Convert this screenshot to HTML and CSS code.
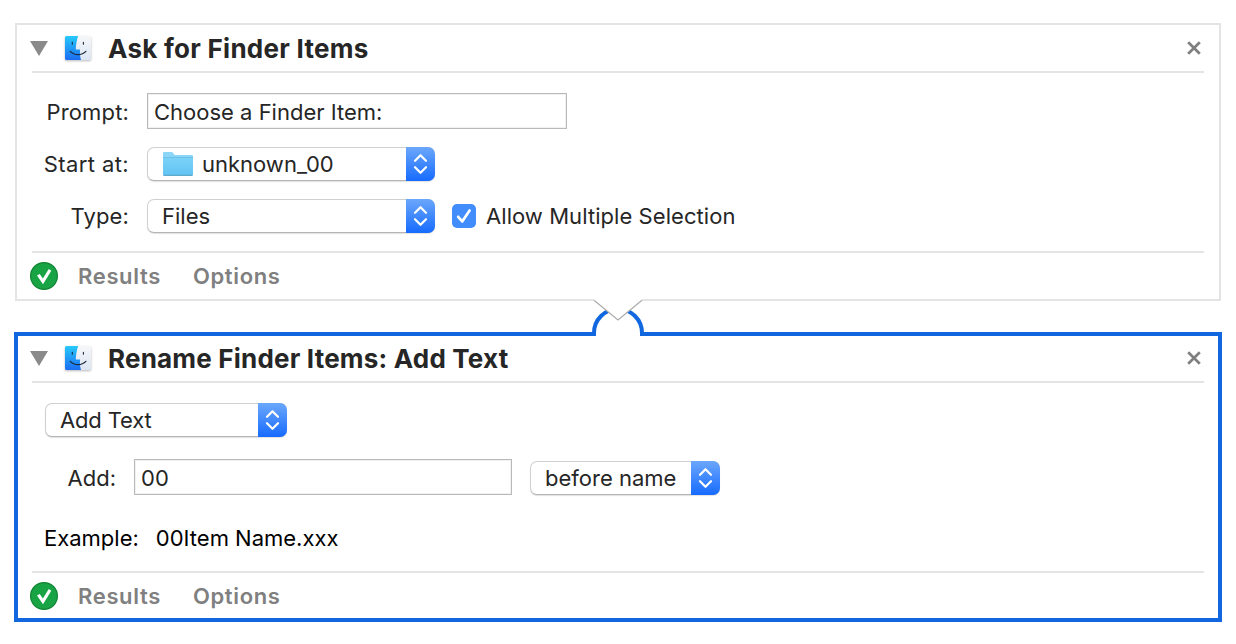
FILE: index.html
```html
<!DOCTYPE html>
<html lang="en">
<head>
<meta charset="utf-8">
<title>Workflow</title>
<link rel="stylesheet" href="styles.css">
</head>
<body>
<svg class="defs" width="0" height="0" aria-hidden="true">
  <defs>
    <linearGradient id="face" x1="0" y1="0" x2="0" y2="1"><stop offset="0" stop-color="#26c9fb"/><stop offset="1" stop-color="#1b6df2"/></linearGradient>
    <linearGradient id="side" x1="0" y1="0" x2="0" y2="1"><stop offset="0" stop-color="#f6f7f9"/><stop offset="1" stop-color="#dbe5f3"/></linearGradient>
    <linearGradient id="folder" x1="0" y1="0" x2="0" y2="1"><stop offset="0" stop-color="#7bd2f8"/><stop offset="1" stop-color="#62c3f2"/></linearGradient>
    <symbol id="finder" viewBox="0 0 28 28">
      <rect x="1" y="1" width="26" height="24" rx="1.5" fill="url(#side)"/>
      <path d="M2.5 1H14.2C12.7 5 12 9.500 11.800 14.500H16C15.800 18 16 21.500 17 25H2.500Q1 25 1 23.500V2.500Q1 1 2.500 1Z" fill="url(#face)"/>
      <path d="M8.300 7.200V9.300M19.400 7.200V9.300" stroke="#1c2b3c" stroke-width="1.100" stroke-linecap="round"/>
      <path d="M6.200 16.300C10.500 20.700 17.600 20.700 21.900 16.300" fill="none" stroke="#1c2b3c" stroke-width="1.200" stroke-linecap="round"/>
    </symbol>
    <symbol id="close" viewBox="0 0 14 14"><path d="M1.200 1.200L12.800 12.800M12.800 1.200L1.200 12.800" stroke="#7f7f7f" stroke-width="2.700"/></symbol>
    <symbol id="updown" viewBox="0 0 15 22"><path d="M2 7.800L7.500 2.200L13 7.800M2 14.200L7.500 19.800L13 14.200" fill="none" stroke="#fff" stroke-width="2.200" stroke-linecap="round" stroke-linejoin="round"/></symbol>
    <symbol id="done" viewBox="0 0 28 28">
      <circle cx="14" cy="14" r="13.400" fill="#18a445" stroke="#138435" stroke-width="1.200"/>
      <path d="M7 13.600L9.700 12L12.900 16.600L18.800 7L21.300 8.700L13 22.300Z" fill="#fff"/>
    </symbol>
  </defs>
</svg>
<main class="workflow">
  <section class="action">
    <header class="head">
      <svg class="disclosure" viewBox="0 0 18 15"><path d="M0 0H18L9 15Z" fill="#8a8a8a"/></svg>
      <svg class="finder"><use href="#finder"/></svg>
      <h2 class="title ask">Ask for Finder Items</h2>
      <svg class="close"><use href="#close"/></svg>
    </header>
    <div class="form">
      <div class="row"><span class="label">Prompt:</span><div class="field prompt">Choose a Finder Item:</div></div>
      <div class="row">
        <span class="label start">Start at:</span>
        <div class="popup wide">
          <svg class="folder" viewBox="0 0 32 26"><path d="M1 23.500V2Q1 1 2 1H9.500Q10.500 1 11.200 2L12.500 4H30Q31 4 31 5V23.500Z" fill="#8bd6f7"/><path d="M1 6.500H31V23.500Q31 24.500 30 24.500H2Q1 24.500 1 23.500Z" fill="url(#folder)"/><path d="M1 6.500H31" stroke="#65bce4" stroke-width=".8"/><path d="M1.500 24.300H30.500" stroke="#4d9dc4"/></svg>
          <span class="value">unknown_00</span><span class="arrows"><svg><use href="#updown"/></svg></span>
        </div>
      </div>
      <div class="row">
        <span class="label">Type:</span>
        <div class="popup wide"><span class="value">Files</span><span class="arrows"><svg><use href="#updown"/></svg></span></div>
        <span class="check"><svg viewBox="0 0 24 24"><path d="M6.200 12.800L10.200 17.400L17.600 6.500" fill="none" stroke="#fff" stroke-width="2.700" stroke-linecap="round" stroke-linejoin="round"/></svg></span>
        <span class="multiple">Allow Multiple Selection</span>
      </div>
    </div>
    <footer class="foot"><svg class="done"><use href="#done"/></svg><span class="results">Results</span><span>Options</span></footer>
  </section>
  <section class="action selected">
    <svg class="connector" viewBox="0 0 56 40">
      <path d="M6 34H50V38H6Z" fill="#fff"/>
      <path d="M4 38V35A24 24 0 0 1 52 35V38" fill="#fff" stroke="#1167df" stroke-width="4"/>
      <path d="M4 0H52V2.300L28 22L4 2.300Z" fill="#fff"/>
      <path d="M4 2.300L28 22L52 2.300" fill="none" stroke="#acacac" stroke-width="1.200"/>
    </svg>
    <header class="head">
      <svg class="disclosure" viewBox="0 0 18 15"><path d="M0 0H18L9 15Z" fill="#8a8a8a"/></svg>
      <svg class="finder"><use href="#finder"/></svg>
      <h2 class="title rename">Rename Finder Items: Add Text</h2>
      <svg class="close"><use href="#close"/></svg>
    </header>
    <div class="form rename-form">
      <div class="popup mode"><span class="value">Add Text</span><span class="arrows"><svg><use href="#updown"/></svg></span></div>
      <div class="row add"><span class="label">Add:</span><div class="field text">00</div>
        <div class="popup position"><span class="value">before name</span><span class="arrows"><svg><use href="#updown"/></svg></span></div></div>
      <div class="example"><span class="caption">Example:</span><span>00Item Name.xxx</span></div>
    </div>
    <footer class="foot"><svg class="done"><use href="#done"/></svg><span class="results">Results</span><span>Options</span></footer>
  </section>
</main>
</body>
</html>
```
FILE: styles.css
```css
* { box-sizing: border-box; }
body { margin: 0; background: #fff; color: #262626; font: 22px/26px Inter, "Liberation Sans", sans-serif; white-space: nowrap; }
svg { display: block; flex: none; }
.defs { position: absolute; }
.workflow { display: flex; flex-direction: column; gap: 31px; padding: 23px 14px 0; }
.action { height: 278px; margin: 0 1px; border: 2px solid #e4e4e4; padding: 0 15px; display: flex; flex-direction: column; }
.selected { position: relative; height: 290px; margin: 0; border: 4px solid #1167df; padding: 0 14px; }
.head { height: 48px; border-bottom: 2px solid #e4e4e4; display: flex; align-items: center; flex: none; }
.selected .head { height: 47px; }
.disclosure { width: 18px; height: 15px; margin-left: -2px; }
.finder { width: 28px; height: 28px; margin-left: 16px; filter: drop-shadow(0 1px 1px rgba(0,0,0,.28)); }
.action .finder { margin-top: 2px; }
.selected .finder { margin-top: 0; }
.title { margin: 0 0 0 16px; font-size: 26px; line-height: 32px; font-weight: 700; }
.ask { letter-spacing: .27px; padding-top: 2px; }
.rename { letter-spacing: .2px; }
.close { width: 14px; height: 14px; margin: 0 3px 0 auto; }
.selected .close { margin-bottom: 2px; }
.form { flex: 1; padding-top: 20px; display: flex; flex-direction: column; }
.row { display: flex; align-items: center; height: 36px; margin-bottom: 16px; }
.label { width: 98px; margin-right: 17px; padding: 2px 1px 0 0; text-align: right; letter-spacing: .15px; }
.start { letter-spacing: .4px; }
.field { height: 36px; border: 1px solid #b9b9b9; box-shadow: inset 0 0 0 1px #f1f1f1; padding: 5px 6px; line-height: 26px; }
.prompt { width: 420px; }
.popup { height: 34px; border: 1px solid #d0d0d0; border-bottom-color: #b5b5b5; border-radius: 7px; box-shadow: 0 1px 1px rgba(0,0,0,.12); display: flex; align-items: center; padding-left: 14px; background: #fff; }
.wide { width: 288px; margin-top: 2px; }
.folder { width: 32px; height: 26px; margin-right: 8px; }
.arrows { width: 29px; height: 34px; margin: -1px -1px -1px auto; border-radius: 0 7px 7px 0; background: linear-gradient(#6ba7fb, #166bff); display: grid; place-items: center; }
.arrows svg { width: 15px; height: 22px; }
.check { width: 24px; height: 24px; margin: 2px 10px 0 17px; border-radius: 5px; background: #428cfb; }
.check svg { width: 24px; height: 24px; }
.multiple { padding-top: 2px; letter-spacing: .06px; }
.foot { height: 48px; border-top: 2px solid #e4e4e4; display: flex; align-items: center; flex: none; color: #808080; font-weight: 600; letter-spacing: .65px; }
.selected .foot { height: 47px; }
.done { width: 28px; height: 28px; margin: 0 20px 0 -2px; }
.results { margin-right: 32px; }
.connector { position: absolute; left: 572px; top: -38px; width: 56px; height: 40px; }
.rename-form { padding-top: 20px; }
.mode { width: 242px; margin-left: 13px; flex: none; }
.mode .value { letter-spacing: -.15px; }
.add { margin: 22px 0 0; }
.add .label { width: 85px; letter-spacing: 0; }
.text { width: 378px; margin-right: 18px; }
.position { width: 190px; margin-top: 2px; }
.example { margin: 30px 0 0 12px; color: #000; display: flex; }
.caption { margin-right: 17px; }
```
